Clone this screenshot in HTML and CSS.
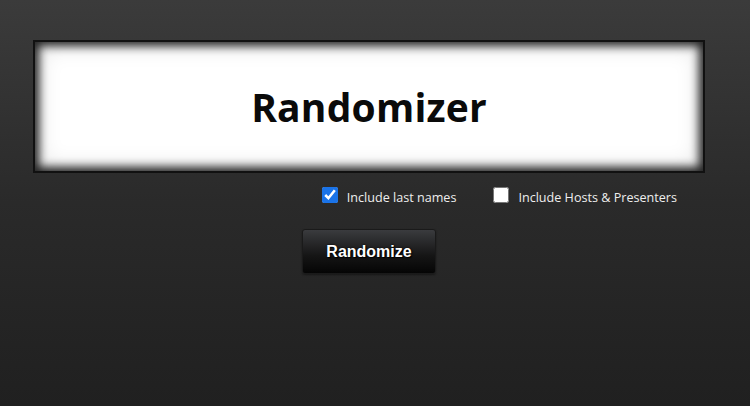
FILE: index.html
```html
<!DOCTYPE html>
<html lang="en">
<head>
  <meta charset="UTF-8">
  <meta name="viewport" content="width=device-width, initial-scale=1.0">
  <title>Randomizer</title>
  <link rel="stylesheet" href="styles.css">
</head>
<body>

  <!-- Result banner -->
  <div class="banner">
    <h1 id="result">Randomizer</h1>
  </div>

  <div class="options">
    <label class="option">
      <input type="checkbox" id="lastNames" checked>
      <span>Include last names</span>
    </label>
    <label class="option">
      <input type="checkbox" id="hosts">
      <span>Include Hosts &amp; Presenters</span>
    </label>
  </div>

  <div class="actions">
    <button class="btn" id="randomizeBtn">Randomize</button>
  </div>

</body>
</html>
```

FILE: styles.css
```css
* { box-sizing: border-box; }
html, body {
  height: 100%;
  margin: 0;
}
body {
  padding: 40px 45px 0 33px;
  background: linear-gradient(to bottom, #3b3b3b 0%, #2a2a2a 50%, #202020 100%);
  color: #e6e6e6;
  font-family: 'Open Sans', sans-serif;
}
.banner {
  height: 133px;
  background: #fff;
  border: 2px solid #111;
  box-shadow: inset 0 0 10px 4px rgba(0,0,0,0.85), inset 0 0 26px rgba(0,0,0,0.18);
  display: flex;
  align-items: center;
  justify-content: center;
}
h1 {
  margin: 0;
  font-size: 39px;
  font-weight: 700;
  color: #0a0a0a;
  letter-spacing: 0.2px;
}
.options {
  display: flex;
  justify-content: flex-end;
  gap: 37px;
  padding-right: 28px;
  margin-top: 10px;
}
.option {
  display: flex;
  align-items: center;
  gap: 9px;
  font-size: 12.6px;
  color: #eeeeee;
}
.option input {
  width: 16px;
  height: 16px;
  margin: 0;
  accent-color: #1a73e8;
}
.option span {
  margin-top: 6px;
}
.actions {
  display: flex;
  justify-content: center;
  margin-top: 23px;
}
.btn {
  width: 134px;
  height: 45px;
  border: 1px solid #1a1a1a;
  border-radius: 3px;
  background: linear-gradient(to bottom, #3a3b3e 0%, #151515 60%, #050505 100%);
  color: #fff;
  font-family: 'Liberation Sans', Arial, sans-serif;
  font-size: 16px;
  font-weight: 700;
  text-shadow: 0 0 2px #000, 1px 1px 1px #000;
  box-shadow: 0 1px 2px rgba(0,0,0,0.4);
  cursor: pointer;
}
```
